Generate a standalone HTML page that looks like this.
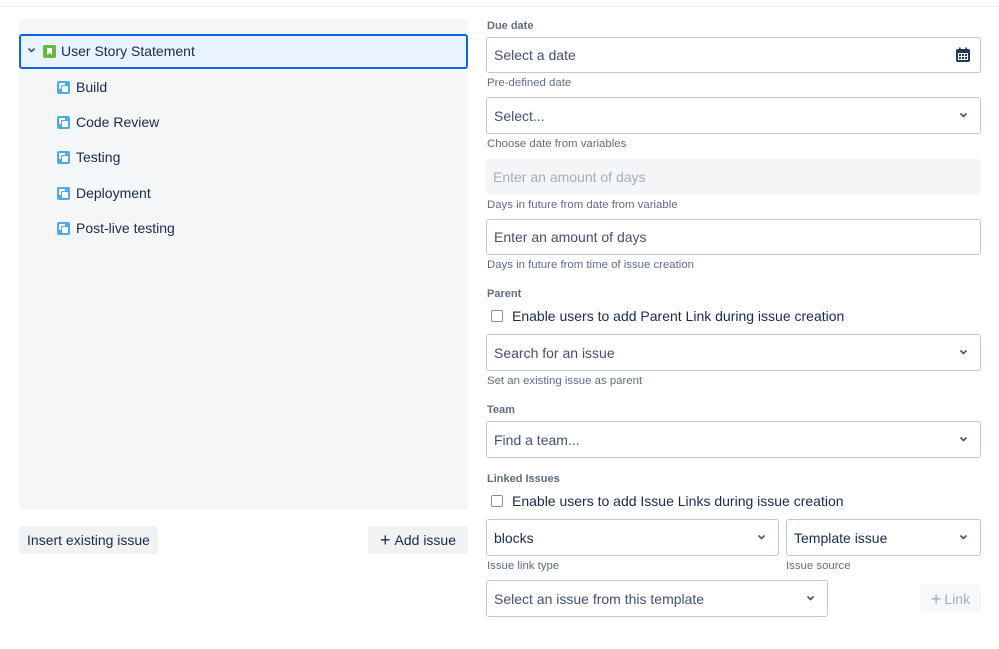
<!DOCTYPE html>
<html><head><style>
*{box-sizing:border-box;margin:0;padding:0}
body{width:999px;height:649px;background:#fff;font-family:"Liberation Sans",sans-serif;color:#172b4d;position:relative;overflow:hidden}
.a{position:absolute}
.lbl{position:absolute;left:487px;font-size:11px;font-weight:bold;color:#5e6c84}
.help{position:absolute;left:487px;font-size:11.4px;color:#5e6c84}
.inp{position:absolute;border:1px solid #c1c7d0;border-radius:3px;background:#fff;font-size:14px;color:#42526e;padding-left:7px;display:flex;align-items:center}
.chev{position:absolute;right:12px;top:50%;margin-top:-4px}
.row{position:absolute;left:57px;font-size:14px;display:flex;align-items:center;gap:6px}
.ic{width:13px;height:13px;border-radius:2px;background:#4bade8;position:relative}
.ic:before{content:"";position:absolute;left:2px;top:2px;width:6px;height:6px;background:#fff;border-radius:1px}
.ic:after{content:"";position:absolute;left:5px;top:5px;width:6px;height:6px;background:#fff;border-radius:1px;box-shadow:-1px -1px 0 #4bade8}
.btn{position:absolute;background:#f1f2f4;border-radius:3px;font-size:14px;color:#172b4d;display:flex;align-items:center;justify-content:center}
.cb{position:absolute;left:491px;width:12px;height:12px;border:1.5px solid #8590a2;border-radius:2px;background:#fff}
.cbt{position:absolute;left:512px;font-size:14px;color:#172b4d}
</style></head><body>
<div class="a" style="left:0;top:6px;width:999px;height:1px;background:#ebecf0"></div>
<div class="a" style="left:19px;top:19px;width:449px;height:491px;background:#f5f6f8;border-radius:3px"></div>
<div class="a" style="left:19px;top:34px;width:449px;height:35px;background:#e9f2ff;border:2px solid #0c66e4;border-radius:3px"></div>
<svg class="a" style="left:27px;top:47px" width="9" height="7" viewBox="0 0 9 7"><path d="M1.5 1.5L4.5 4.5L7.5 1.5" stroke="#42526e" stroke-width="1.6" fill="none"/></svg>
<div class="a" style="left:43px;top:45px;width:13px;height:13px;background:#63ba3c;border-radius:2px"><svg width="13" height="13"><path d="M4 3h5v7l-2.5-2L4 10z" fill="#fff"/></svg></div>
<div class="a" style="left:61px;top:43px;font-size:14px">User Story Statement</div>
<div class="row" style="top:79px"><div class="ic"></div><span>Build</span></div>
<div class="row" style="top:114px"><div class="ic"></div><span>Code Review</span></div>
<div class="row" style="top:149px"><div class="ic"></div><span>Testing</span></div>
<div class="row" style="top:185px"><div class="ic"></div><span>Deployment</span></div>
<div class="row" style="top:220px"><div class="ic"></div><span>Post-live testing</span></div>
<div class="btn" style="left:19px;top:526px;width:139px;height:28px">Insert existing issue</div>
<div class="btn" style="left:368px;top:526px;width:100px;height:28px"><span style="font-size:18px;margin-right:4px;line-height:1">+</span>Add issue</div>

<div class="lbl" style="top:20px">Due date</div>
<div class="inp" style="left:486px;top:37px;width:495px;height:36px">Select a date
<svg class="a" style="right:8px;top:8px" width="18" height="18" viewBox="0 0 18 18"><rect x="2" y="3" width="14" height="13" rx="2" fill="#253858"/><rect x="4" y="7" width="10" height="7" fill="#fff"/><rect x="5" y="1.5" width="1.6" height="3" fill="#253858"/><rect x="11.4" y="1.5" width="1.6" height="3" fill="#253858"/><g fill="#253858"><rect x="5" y="8" width="2" height="2"/><rect x="8" y="8" width="2" height="2"/><rect x="11" y="8" width="2" height="2"/><rect x="5" y="11" width="2" height="2"/><rect x="8" y="11" width="2" height="2"/><rect x="11" y="11" width="2" height="2"/></g></svg></div>
<div class="help" style="top:77px">Pre-defined date</div>
<div class="inp" style="left:486px;top:97px;width:495px;height:37px">Select...<svg class="chev" width="9" height="7"><path d="M1.5 1.5L4.5 4.5L7.5 1.5" stroke="#42526e" stroke-width="1.6" fill="none"/></svg></div>
<div class="help" style="top:138px">Choose date from variables</div>
<div class="inp" style="left:486px;top:159px;width:495px;height:36px;background:#f4f5f7;border-color:#f4f5f7;color:#a5adba;padding-left:6px">Enter an amount of days</div>
<div class="help" style="top:199px">Days in future from date from variable</div>
<div class="inp" style="left:486px;top:219px;width:495px;height:36px">Enter an amount of days</div>
<div class="help" style="top:259px">Days in future from time of issue creation</div>
<div class="lbl" style="top:288px">Parent</div>
<div class="cb" style="top:310px"></div><div class="cbt" style="top:308px">Enable users to add Parent Link during issue creation</div>
<div class="inp" style="left:486px;top:334px;width:495px;height:37px">Search for an issue<svg class="chev" width="9" height="7"><path d="M1.5 1.5L4.5 4.5L7.5 1.5" stroke="#42526e" stroke-width="1.6" fill="none"/></svg></div>
<div class="help" style="top:375px">Set an existing issue as parent</div>
<div class="lbl" style="top:404px">Team</div>
<div class="inp" style="left:486px;top:421px;width:495px;height:37px">Find a team...<svg class="chev" width="9" height="7"><path d="M1.5 1.5L4.5 4.5L7.5 1.5" stroke="#42526e" stroke-width="1.6" fill="none"/></svg></div>
<div class="lbl" style="top:473px">Linked Issues</div>
<div class="cb" style="top:495px"></div><div class="cbt" style="top:493px">Enable users to add Issue Links during issue creation</div>
<div class="inp" style="left:486px;top:519px;width:293px;height:37px;color:#172b4d">blocks<svg class="chev" width="9" height="7"><path d="M1.5 1.5L4.5 4.5L7.5 1.5" stroke="#42526e" stroke-width="1.6" fill="none"/></svg></div>
<div class="inp" style="left:786px;top:519px;width:195px;height:37px;color:#172b4d">Template issue<svg class="chev" width="9" height="7"><path d="M1.5 1.5L4.5 4.5L7.5 1.5" stroke="#42526e" stroke-width="1.6" fill="none"/></svg></div>
<div class="help" style="top:560px">Issue link type</div>
<div class="help" style="top:560px;left:786px">Issue source</div>
<div class="inp" style="left:486px;top:580px;width:342px;height:37px">Select an issue from this template<svg class="chev" width="9" height="7"><path d="M1.5 1.5L4.5 4.5L7.5 1.5" stroke="#42526e" stroke-width="1.6" fill="none"/></svg></div>
<div class="btn" style="left:920px;top:584px;width:61px;height:29px;background:#f7f8f9;color:#a5adba"><span style="font-size:18px;margin-right:3px;line-height:1">+</span>Link</div>
</body></html>
